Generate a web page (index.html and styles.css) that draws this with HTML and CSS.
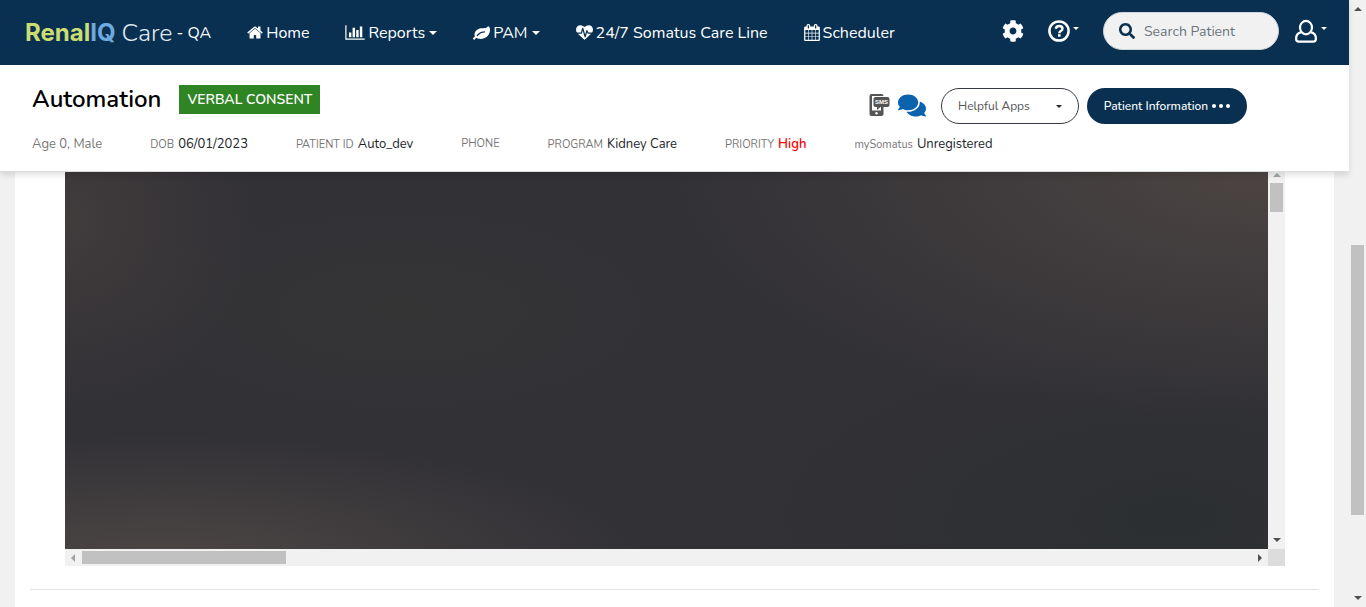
FILE: index.html
```html
<!DOCTYPE html>
<html lang="en">
<head>
<meta charset="utf-8">
<title>RenalIQ Care - QA</title>
<link rel="stylesheet" href="styles.css">
</head>
<body>
<div class="app">
  <header class="top">
    <nav class="navbar">
      <a class="brand" href="#"><span class="brand-renal">Renal<span class="brand-iq">IQ</span></span><span class="brand-care">Care</span><span class="brand-env">- QA</span></a>
      <a class="nav-link" href="#"><svg class="ico ico-narrow" viewBox="64 0 1664 1792"><path d="M1472 992v480q0 26-19 45t-45 19h-384v-384h-256v384h-384q-26 0-45-19t-19-45v-480q0-1 .5-3t.5-3l575-474 575 474q1 2 1 6zm223-69l-62 74q-8 9-21 11h-3q-13 0-21-7l-692-577-692 577q-12 8-24 7-13-2-21-11l-62-74q-8-10-7-23.5t11-21.5l719-599q32-26 76-26t76 26l244 204v-195q0-14 9-23t23-9h192q14 0 23 9t9 23v408l219 182q10 8 11 21.5t-7 23.5z"/></svg>Home</a>
      <button class="nav-link" type="button"><svg class="ico ico-wide" viewBox="0 0 2048 1792"><path d="M640 896v512h-256v-512h256zm384-512v1024h-256v-1024h256zm1024 1152v128h-2048v-1536h128v1408h1920zm-640-896v768h-256v-768h256zm384-384v1152h-256v-1152h256z"/></svg>Reports<span class="caret"></span></button>
      <button class="nav-link" type="button"><svg class="ico" viewBox="0 0 1792 1792"><path d="M1280 832q0-26-19-45t-45-19q-172 0-318 49.5t-259.5 134-235.5 219.5q-19 21-19 45 0 26 19 45t45 19q24 0 45-19 27-24 74-71t67-66q137-124 268.500-176t313.500-52q26 0 45-19t19-45zm512-198q0 95-20 193-46 224-184.500 383t-357.500 268q-214 108-438 108-148 0-286-47-15-5-88-42t-96-37q-16 0-39.500 32t-45 70-52.500 70-60 32q-43 0-63.500-17.500t-45.500-59.500q-2-4-6-11t-5.500-10-3-9.500-1.500-13.500q0-35 31-73.500t68-65.500 68-56 31-48q0-4-14-38t-16-44q-9-51-9-104 0-115 43.500-220t119-184.500 170.500-139 204-95.500q55-18 145-25.500t179.500-9 178.500-6 163.500-24 113.500-56.500l29.500-29.500 29.500-28 27-20 36.500-16 43.500-4.500q39 0 70.500 46t47.500 112 24 124 8 96z"/></svg>PAM<span class="caret"></span></button>
      <a class="nav-link" href="#"><svg class="ico" viewBox="0 0 1792 1792"><path d="M1280 1024h305q-5 6-10 10.500t-9 7.500l-3 4-623 600q-18 18-44 18t-44-18l-624-602q-5-2-21-20h369q22 0 39.500-13.500t22.500-34.500l70-281 190 667q6 20 23 33t39 13q21 0 38-13t23-33l146-485 56 112q18 35 57 35zm512-428q0 145-103 300h-369l-111-221q-8-17-25.500-27t-36.500-8q-45 5-56 46l-129 430-196-686q-6-20-23.500-33t-39.500-13-39 13.500-22 34.500l-116 464h-423q-103-155-103-300 0-220 127-344t351-124q62 0 126.500 21.500t120 58 95.500 68.500 76 68q36-36 76-68t95.500-68.500 120-58 126.500-21.500q224 0 351 124t127 344z"/></svg>24/7 Somatus Care Line</a>
      <a class="nav-link" href="#"><svg class="ico ico-narrow" viewBox="64 0 1664 1792"><path d="M192 1664h288v-288h-288v288zm352 0h320v-288h-320v288zm-352-352h288v-320h-288v320zm352 0h320v-320h-320v320zm-352-384h288v-288h-288v288zm736 736h320v-288h-320v288zm-384-736h320v-288h-320v288zm768 736h288v-288h-288v288zm-384-352h320v-320h-320v320zm-352-864v-288q0-13-9.500-22.500t-22.500-9.500h-64q-13 0-22.500 9.500t-9.500 22.500v288q0 13 9.500 22.500t22.500 9.500h64q13 0 22.500-9.500t9.500-22.500zm736 864h288v-320h-288v320zm-384-384h320v-288h-320v288zm384 0h288v-288h-288v288zm32-480v-288q0-13-9.500-22.500t-22.500-9.500h-64q-13 0-22.500 9.500t-9.500 22.500v288q0 13 9.500 22.500t22.500 9.500h64q13 0 22.500-9.500t9.500-22.500zm384-64v1280q0 52-38 90t-90 38h-1408q-52 0-90-38t-38-90v-1280q0-52 38-90t90-38h128v-96q0-66 47-113t113-47h64q66 0 113 47t47 113v96h384v-96q0-66 47-113t113-47h64q66 0 113 47t47 113v96h128q52 0 90 38t38 90z"/></svg>Scheduler</a>
      <div class="tools">
        <button class="tool" type="button" aria-label="Settings"><svg class="ico-lg" viewBox="0 0 512 512"><path d="M487.4 315.7l-42.600-24.600c4.300-23.200 4.300-47 0-70.200l42.600-24.600c4.900-2.800 7.100-8.600 5.500-14-11.100-35.600-30-67.800-54.700-94.600-3.800-4.100-10-5.100-14.800-2.300L380.800 110c-17.900-15.400-38.500-27.300-60.800-35.100V25.800c0-5.600-3.900-10.500-9.400-11.700-36.700-8.200-74.300-7.800-109.200 0-5.500 1.200-9.400 6.100-9.400 11.700V75c-22.200 7.900-42.800 19.800-60.800 35.100L88.700 85.500c-4.900-2.800-11-1.900-14.800 2.300-24.700 26.700-43.600 58.900-54.700 94.600-1.700 5.400.6 11.200 5.500 14L67.300 221c-4.300 23.200-4.300 47 0 70.200l-42.600 24.600c-4.900 2.800-7.100 8.600-5.500 14 11.100 35.600 30 67.800 54.700 94.600 3.800 4.100 10 5.100 14.800 2.300l42.600-24.600c17.900 15.400 38.500 27.300 60.800 35.100v49.200c0 5.600 3.900 10.500 9.400 11.700 36.700 8.200 74.300 7.800 109.200 0 5.500-1.200 9.400-6.100 9.400-11.700v-49.200c22.200-7.900 42.800-19.800 60.800-35.100l42.600 24.600c4.900 2.800 11 1.900 14.800-2.300 24.700-26.700 43.600-58.900 54.700-94.600 1.500-5.500-.7-11.300-5.600-14.100zM256 336c-44.100 0-80-35.900-80-80s35.900-80 80-80 80 35.900 80 80-35.900 80-80 80z"/></svg></button>
        <button class="tool" type="button" aria-label="Help"><svg class="ico-lg" viewBox="0 0 22 22"><circle cx="11" cy="11" r="9.600" fill="none" stroke="#fff" stroke-width="2.500"/><path d="M7.700 8.800C8 6.800 9.300 6 11.200 6c2 0 3.300 1.100 3.300 2.700 0 2.500-3.200 2.300-3.200 4.500" fill="none" stroke="#fff" stroke-width="2.400"/><rect x="10" y="14.200" width="2.600" height="2.500"/></svg><span class="caret caret-sm"></span></button>
        <form class="search">
          <label class="search-label" for="q" aria-label="Search Patient"><svg class="ico-search" viewBox="0 0 512 512"><path d="M505 442.700L405.300 343c-4.500-4.500-10.600-7-17-7H372c27.600-35.300 44-79.700 44-128C416 93.100 322.900 0 208 0S0 93.100 0 208s93.100 208 208 208c48.300 0 92.700-16.400 128-44v16.300c0 6.400 2.500 12.500 7 17l99.700 99.700c9.400 9.400 24.600 9.400 33.900 0l28.300-28.300c9.400-9.400 9.400-24.600.1-34zM208 336c-70.700 0-128-57.200-128-128 0-70.700 57.200-128 128-128 70.700 0 128 57.200 128 128 0 70.700-57.200 128-128 128z"/></svg></label>
          <input id="q" class="search-input" type="text" placeholder="Search Patient">
        </form>
        <button class="tool" type="button" aria-label="Account"><svg class="ico-user" viewBox="0 0 24 24"><g fill="none" stroke="#fff" stroke-width="2.200"><ellipse cx="12" cy="8.600" rx="6" ry="6.700"/><path d="M7.300 13.200C3.300 14 2.100 16.800 2.100 19.800q0 2.900 2.700 2.900h14.400q2.700 0 2.700-2.900c0-3-1.200-5.800-5.200-6.600"/></g></svg><span class="caret caret-sm"></span></button>
      </div>
    </nav>
    <section class="patient">
      <div class="patient-row">
        <h1 class="patient-name">Automation</h1>
        <span class="badge">VERBAL CONSENT</span>
        <div class="actions">
          <button class="icon-btn" type="button" aria-label="Text message"><svg class="ico-sms" viewBox="0 0 20 22"><path fill="#555" d="M2 0h10q2 0 2 2H2.500v15h9V13H14v7q0 2-2 2H2q-2 0-2-2V2Q0 0 2 0z"/><path fill="#555" d="M2.500 16.500h9V19h-9z"/><circle cx="7" cy="19.300" r="1.200" fill="#fff"/><path fill="#555" d="M6 3h12q2 0 2 2v6q0 2-2 2h-7l-3.500 3v-3H6q-2 0-2-2V5q0-2 2-2z"/><text class="sms-text" x="12" y="10" text-anchor="middle">SMS</text></svg></button>
          <button class="icon-btn" type="button" aria-label="Chat"><svg class="ico-chat" viewBox="0 0 576 512"><path d="M416 192c0-88.400-93.100-160-208-160S0 103.600 0 192c0 34.300 14.100 65.900 38 92-13.400 30.200-35.500 54.200-35.800 54.500-2.200 2.300-2.800 5.700-1.500 8.700S4.800 352 8 352c36.600 0 66.900-12.300 88.700-25 32.200 15.700 70.300 25 111.300 25 114.900 0 208-71.600 208-160zm122 220c23.900-26 38-57.700 38-92 0-66.900-53.500-124.200-129.300-148.100.9 6.600 1.300 13.300 1.300 20.100 0 105.900-107.700 192-240 192-10.800 0-21.300-.8-31.700-1.900C207.800 439.600 281.800 480 368 480c41 0 79.100-9.200 111.300-25 21.800 12.700 52.100 25 88.700 25 3.200 0 6.100-1.900 7.300-4.800 1.300-2.900.7-6.300-1.500-8.700-.3-.3-22.400-24.200-35.800-54.500z"/></svg></button>
          <div class="apps">
            <select class="apps-select" aria-label="Helpful Apps"><option>Helpful Apps</option></select>
            <span class="caret caret-apps"></span>
          </div>
          <button class="info-btn" type="button">Patient Information<span class="dots"><i></i><i></i><i></i></span></button>
        </div>
      </div>
      <dl class="facts">
        <div class="fact"><dt class="fact-age">Age 0, Male</dt></div>
        <div class="fact"><dt>DOB</dt><dd>06/01/2023</dd></div>
        <div class="fact"><dt>PATIENT ID</dt><dd>Auto_dev</dd></div>
        <div class="fact"><dt>PHONE</dt></div>
        <div class="fact"><dt>PROGRAM</dt><dd>Kidney Care</dd></div>
        <div class="fact"><dt>PRIORITY</dt><dd class="high">High</dd></div>
        <div class="fact"><dt>mySomatus</dt><dd>Unregistered</dd></div>
      </dl>
    </section>
  </header>
  <main class="sheet">
    <div class="viewer">
      <div class="photo"></div>
      <div class="bar bar-v"><span class="arrow up off"></span><span class="thumb viewer-v"></span><span class="arrow down"></span></div>
      <div class="bar bar-h"><span class="arrow left off"></span><span class="thumb viewer-h"></span><span class="arrow right"></span></div>
      <div class="corner"></div>
    </div>
    <hr class="rule">
  </main>
</div>
<div class="bar bar-v page-bar"><span class="arrow up"></span><span class="thumb page-v"></span><span class="arrow down"></span></div>
</body>
</html>
```
FILE: styles.css
```css
* { box-sizing: border-box; }

body {
  margin: 0;
  height: 100vh;
  display: flex;
  overflow: hidden;
  background: #f1f1f1;
  color: #212529;
  font-family: Nunito, Lato, sans-serif;
  font-size: 13px;
}

button, input, select { font: inherit; color: inherit; }
button { margin: 0; padding: 0; border: 0; background: none; }
svg { display: block; flex: none; fill: currentColor; }

.app { flex: 1; min-width: 0; display: flex; flex-direction: column; }

.top {
  position: relative;
  z-index: 1;
  background: #fff;
  border-bottom: 1px solid #ddd;
  box-shadow: 0 3px 6px rgba(0, 0, 0, 0.12);
}

.navbar {
  display: flex;
  align-items: center;
  gap: 36px;
  height: 65px;
  padding: 0 22px 0 25px;
  background: #093050;
  color: #fff;
  white-space: nowrap;
}

.brand { display: flex; align-items: center; color: #fff; text-decoration: none; }
.brand-renal { font-family: Inter, Lato, sans-serif; font-size: 24px; font-weight: 700; color: #cbdd72; }
.brand-iq { color: #70a9dd; }
.brand-care { margin: 0 4px 0 6px; font-size: 25px; font-weight: 300; color: #dfe8ef; }
.brand-env { font-size: 16px; }

.nav-link {
  display: flex;
  align-items: center;
  gap: 3px;
  color: #fff;
  font-size: 16px;
  text-decoration: none;
}

.ico { width: 17px; height: 17px; }
.ico-narrow { width: 16px; }
.ico-wide { width: 20px; }
.ico-search { width: 16px; height: 16px; }
.ico-lg { width: 22px; height: 22px; }
.ico-user { width: 24px; height: 24px; }

.caret {
  border: 4px solid transparent;
  border-top-color: currentColor;
  border-bottom: 0;
}
.nav-link .caret { margin-left: 1px; }
.caret-sm { border-width: 3px 3px 0; margin-bottom: 6px; }

.tools { display: flex; align-items: center; gap: 24px; margin-left: auto; padding-bottom: 3px; }
.tool { display: flex; align-items: center; gap: 3px; color: #fff; }
.search + .tool { margin-left: -9px; }

.search {
  display: flex;
  align-items: center;
  width: 176px;
  height: 38px;
  padding: 0 15px;
  gap: 9px;
  border: 1px solid #ced4da;
  border-radius: 19px;
  background: #f1f1f1;
}
.search-label { color: #093050; }
.search-input {
  min-width: 0;
  flex: 1;
  padding: 0;
  border: 0;
  outline: 0;
  background: none;
  font-size: 14px;
}
.search-input::placeholder { color: #6c757d; }

.patient { padding: 16px 102px 17px 32px; }
.patient-row { display: flex; align-items: flex-start; gap: 18px; padding-bottom: 11px; }
.patient-name { margin: 0; font-size: 24px; line-height: 36px; font-weight: 600; color: #000; }
.badge {
  margin-top: 4px;
  padding: 0 8px;
  background: #2f8424;
  color: #fff;
  font-size: 14px;
  line-height: 29px;
  font-weight: 600;
}

.actions { display: flex; align-items: center; gap: 8px; margin-left: auto; padding-top: 7px; }
.ico-sms { width: 21px; height: 22px; }
.sms-text { font: 700 6px "Liberation Sans", sans-serif; fill: #fff; }
.ico-chat { width: 28px; height: 25px; color: #0c62ad; }
.icon-btn { padding-bottom: 2px; }
.icon-btn:nth-of-type(2) { margin-right: 7px; }

.apps { display: grid; align-items: center; width: 138px; height: 36px; }
.apps-select {
  grid-area: 1 / 1;
  height: 36px;
  padding: 0 16px;
  border: 1px solid #343a40;
  border-radius: 18px;
  background: #fff;
  color: #555;
  font-size: 12px;
  appearance: none;
}
.caret-apps { grid-area: 1 / 1; justify-self: end; margin-right: 17px; border-width: 3px 3px 0; }

.info-btn {
  display: flex;
  align-items: center;
  justify-content: center;
  gap: 4px;
  width: 160px;
  height: 36px;
  border-radius: 18px;
  background: #093050;
  color: #fff;
  font-size: 12px;
  font-weight: 500;
}
.dots { display: flex; gap: 3px; }
.dots i { width: 4px; height: 4px; border-radius: 2px; background: #fff; }

.facts { display: flex; gap: 48px; margin: 0; line-height: 18px; white-space: nowrap; }
.fact { display: flex; align-items: baseline; gap: 4px; }
.fact dt { color: #777; font-size: 11px; }
.fact .fact-age { font-size: 13px; }
.fact dd { margin: 0; font-size: 13px; }
.fact .high { color: #f00; font-weight: 600; }

.sheet {
  flex: 1;
  margin: -6px 15px 0;
  padding: 0 15px;
  background: #fff;
}

.viewer {
  display: grid;
  grid-template: 383px 17px / 1fr 17px;
  margin: 0 34px 0 35px;
}
.photo {
  background:
    radial-gradient(ellipse 600px 260px at 100% 0%, rgba(80, 72, 69, 0.85), transparent),
    radial-gradient(ellipse 480px 130px at 8% 104%, rgba(82, 75, 72, 0.85), transparent),
    radial-gradient(ellipse 190px 190px at 0% 14%, rgba(70, 63, 62, 0.75), transparent),
    radial-gradient(ellipse 420px 180px at 92% 92%, #2c2f32, transparent),
    radial-gradient(ellipse 300px 120px at 28% 38%, #343435, transparent),
    #323136;
}

.bar { display: flex; align-items: center; background: #f1f1f1; }
.bar-v { flex-direction: column; width: 17px; padding: 7px 0; }
.bar-h { padding: 0 6px; }
.corner { background: #dcdcdc; }
.thumb { background: #c1c1c1; }
.viewer-v { width: 13px; height: 29px; margin-top: 6px; }
.viewer-h { width: 204px; height: 13px; margin-left: 7px; }
.page-v { width: 13px; height: 270px; margin-top: 234px; }

.arrow { border: 4px solid transparent; color: #505050; }
.off { color: #a3a3a3; }
.up { border-top: 0; border-bottom-color: currentColor; }
.down { margin-top: auto; border-bottom: 0; border-top-color: currentColor; }
.left { border-left: 0; border-right-color: currentColor; }
.right { margin-left: auto; border-right: 0; border-left-color: currentColor; }

.rule { margin: 23px 0 0; border: 0; border-top: 1px solid #e3e3e3; }
```
